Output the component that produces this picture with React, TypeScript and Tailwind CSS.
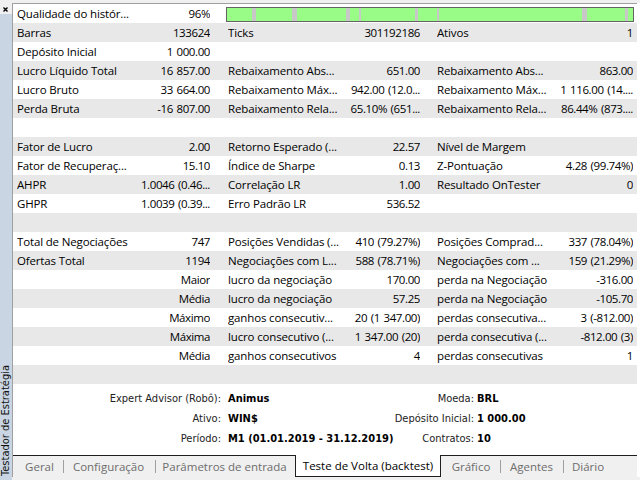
import React from "react";

type DataRow = [string, string, string, string, string, string];
type Row = { kind: "quality" } | { kind: "blank" } | { kind: "data"; cells: DataRow };

const D = (...cells: DataRow): Row => ({ kind: "data", cells });

const rows: Row[] = [
  { kind: "quality" },
  D("Barras", "133624", "Ticks", "301192186", "Ativos", "1"),
  D("Depósito Inicial", "1 000.00", "", "", "", ""),
  D("Lucro Líquido Total", "16 857.00", "Rebaixamento Abs...", "651.00", "Rebaixamento Abs...", "863.00"),
  D("Lucro Bruto", "33 664.00", "Rebaixamento Máx...", "942.00 (12.0...", "Rebaixamento Máx...", "1 116.00 (14...."),
  D("Perda Bruta", "-16 807.00", "Rebaixamento Rela...", "65.10% (651...", "Rebaixamento Rela...", "86.44% (873...."),
  { kind: "blank" },
  D("Fator de Lucro", "2.00", "Retorno Esperado (...", "22.57", "Nível de Margem", ""),
  D("Fator de Recuperaç...", "15.10", "Índice de Sharpe", "0.13", "Z-Pontuação", "4.28 (99.74%)"),
  D("AHPR", "1.0046 (0.46...", "Correlação LR", "1.00", "Resultado OnTester", "0"),
  D("GHPR", "1.0039 (0.39...", "Erro Padrão LR", "536.52", "", ""),
  { kind: "blank" },
  D("Total de Negociações", "747", "Posições Vendidas (...", "410 (79.27%)", "Posições Comprad...", "337 (78.04%)"),
  D("Ofertas Total", "1194", "Negociações com L...", "588 (78.71%)", "Negociações com ...", "159 (21.29%)"),
  D("", "Maior", "lucro da negociação", "170.00", "perda na Negociação", "-316.00"),
  D("", "Média", "lucro da negociação", "57.25", "perda na Negociação", "-105.70"),
  D("", "Máximo", "ganhos consecutiv...", "20 (1 347.00)", "perdas consecutiva...", "3 (-812.00)"),
  D("", "Máxima", "lucro consecutivo (...", "1 347.00 (20)", "perda consecutiva (...", "-812.00 (3)"),
  D("", "Média", "ganhos consecutivos", "4", "perdas consecutivas", "1"),
  { kind: "blank" },
];

// gaps in the tick history, as [x, width] inside the quality bar
const gaps: [number, number][] = [
  [25, 4],
  [65, 5],
  [119, 4],
  [132, 2],
  [188, 3],
  [210, 2],
  [355, 5],
  [398, 3],
];

const info: [string, string, string, string][] = [
  ["Expert Advisor (Robô):", "Animus", "Moeda:", "BRL"],
  ["Ativo:", "WIN$", "Depósito Inicial:", "1 000.00"],
  ["Período:", "M1 (01.01.2019 - 31.12.2019)", "Contratos:", "10"],
];

function Pair({ label, value, className }: { label: string; value: string; className: string }) {
  return (
    <div className={className}>
      <div className="w-[116px] shrink-0 overflow-hidden whitespace-nowrap tracking-[-0.15px]">{label}</div>
      <div className="flex min-w-0 flex-1 justify-end overflow-hidden whitespace-nowrap tracking-[-0.4px] [word-spacing:1px]">
        <span className="shrink-0">{value}</span>
      </div>
    </div>
  );
}

const col1 = "flex h-full w-[211px] shrink-0 items-center pl-[4px] pr-[14px]";
const col2 = "flex h-full w-[210px] shrink-0 items-center pl-[4px] pr-[14px]";
const col3 = "flex h-full min-w-0 flex-1 items-center pl-[3px] pr-[4px]";

function QualityBar() {
  return (
    <svg width="408" height="15" className="ml-[2px] mt-[3px] block self-start">
      <rect x="0.5" y="0.5" width="407" height="14" fill="#99fc86" stroke="#646464" />
      {gaps.map(([x, w], i) => (
        <rect key={i} x={x + 1} y={1} width={w} height={13} fill="#c8c8c8" />
      ))}
    </svg>
  );
}

function Sep() {
  return <div className="h-[13px] w-px shrink-0 self-center bg-[#a0a0a0]" />;
}

export default function App() {
  return (
    <div className="flex h-[480px] w-[640px] overflow-hidden bg-white font-['Open_Sans',sans-serif] text-[11.5px] text-black">
      {/* docked panel caption */}
      <div className="flex h-full w-[12px] shrink-0 flex-col">
        <div className="h-[14px] shrink-0 bg-[#f0f0f0] pl-[3px] pt-[7px]">
          <svg width="5" height="5" viewBox="0 0 5 5" className="block">
            <path d="M0.5 0.5 L4.5 4.5 M4.5 0.5 L0.5 4.5" stroke="#000" strokeWidth="1.4" />
          </svg>
        </div>
        <div className="flex flex-1 flex-col items-center justify-end bg-[#c9d5e2] pb-[4px]">
          <span className="rotate-180 whitespace-nowrap font-['DejaVu_Sans_Condensed','Liberation_Sans',sans-serif] text-[11px] leading-[12px] text-[#111] [writing-mode:vertical-rl]">
            Testador de Estratégia
          </span>
        </div>
      </div>

      <div className="flex h-full min-w-0 flex-1 flex-col">
        <div className="h-[3px] shrink-0 bg-[#f0f0f0]" />
        <div className="flex">
          <div className="flex min-w-0 flex-1 flex-col border-l border-t border-[#a0a0a0] bg-white">
            {rows.map((r, i) => (
              <div
                key={i}
                className={i % 2 === 0 ? "flex h-[19px] bg-white" : "flex h-[19px] bg-[#e8e8e8]"}
              >
                {r.kind === "quality" && (
                  <>
                    <Pair label="Qualidade do histór..." value="96%" className={col1} />
                    <QualityBar />
                  </>
                )}
                {r.kind === "data" && (
                  <>
                    <Pair label={r.cells[0]} value={r.cells[1]} className={col1} />
                    <Pair label={r.cells[2]} value={r.cells[3]} className={col2} />
                    <Pair label={r.cells[4]} value={r.cells[5]} className={col3} />
                  </>
                )}
              </div>
            ))}

            <div className="flex h-[71px] flex-col pt-[5px] font-['DejaVu_Sans_Condensed','Liberation_Sans',sans-serif] text-[11px]">
              {info.map((r) => (
                <div key={r[0]} className="flex h-[20px] items-center whitespace-nowrap">
                  <div className="flex w-[208px] shrink-0 justify-end text-[#222]">
                    <span className="shrink-0">{r[0]}</span>
                  </div>
                  <div className="ml-[7px] w-[172px] shrink-0 font-bold">{r[1]}</div>
                  <div className="flex w-[74px] shrink-0 justify-end text-[#222]">
                    <span className="shrink-0">{r[2]}</span>
                  </div>
                  <div className="ml-[3px] font-bold">{r[3]}</div>
                </div>
              ))}
            </div>

            <div className="flex h-[22px] items-stretch border-t border-[#1e1e1e] bg-[#f0f0f0] text-[#6d6d6d]">
              <div className="ml-[13px] flex w-[27px] items-center justify-center whitespace-nowrap">Geral</div>
              <div className="ml-[10px] flex"><Sep /></div>
              <div className="ml-[9px] flex w-[71px] items-center justify-center whitespace-nowrap">Configuração</div>
              <div className="ml-[11px] flex"><Sep /></div>
              <div className="ml-[10px] flex w-[117px] items-center justify-center whitespace-nowrap">Parâmetros de entrada</div>
              <div className="-mt-px ml-[12px] flex h-[22px] w-[146px] items-center justify-center whitespace-nowrap border-x border-b border-[#1e1e1e] bg-white text-black">
                Teste de Volta (backtest)
              </div>
              <div className="ml-[12px] flex w-[36px] items-center justify-center whitespace-nowrap">Gráfico</div>
              <div className="ml-[11px] flex"><Sep /></div>
              <div className="ml-[9px] flex w-[43px] items-center justify-center whitespace-nowrap">Agentes</div>
              <div className="ml-[10px] flex"><Sep /></div>
              <div className="ml-[9px] flex w-[30px] items-center justify-center whitespace-nowrap">Diário</div>
            </div>
          </div>
          <div className="w-[3px] shrink-0 bg-white" />
        </div>
        <div className="flex-1 bg-[#f0f0f0]" />
      </div>
    </div>
  );
}
